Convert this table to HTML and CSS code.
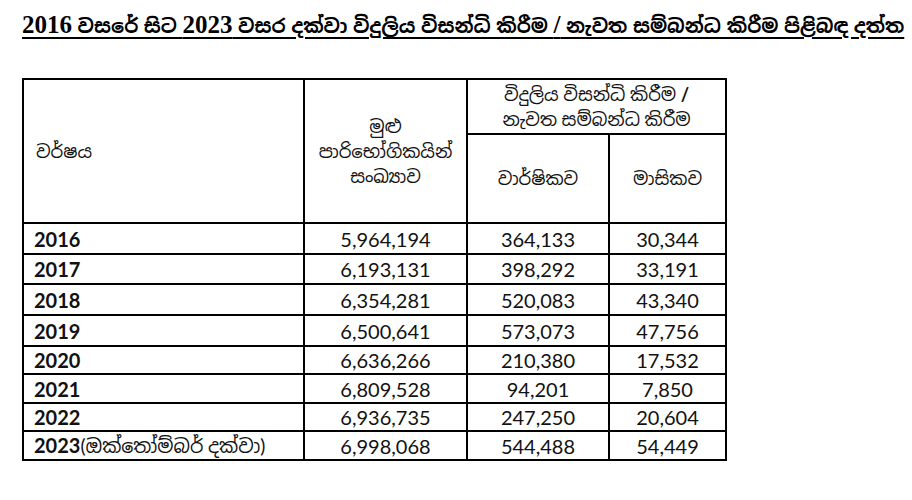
FILE: index.html
```html
<!DOCTYPE html>
<html lang="si">
<head>
<meta charset="utf-8">
<link rel="stylesheet" href="styles.css">
</head>
<body>
<div class="page">
  <h1 class="title"><span class="num">2016</span> වසරේ සිට <span class="num">2023</span> වසර දක්වා විදුලිය විසන්ධි කිරීම <span class="num">/</span> නැවත සම්බන්ධ කිරීම පිළිබඳ දත්ත</h1>
  <table class="data">
    <colgroup>
      <col class="c1"><col class="c2"><col class="c3"><col class="c4">
    </colgroup>
    <thead>
      <tr class="h1">
        <th rowspan="2" class="year-h">වර්ෂය</th>
        <th rowspan="2">මුළු<br>පාරිභෝගිකයින්<br>සංඛ්‍යාව</th>
        <th colspan="2">විදුලිය විසන්ධි කිරීම <b>/</b><br>නැවත සම්බන්ධ කිරීම</th>
      </tr>
      <tr class="h2">
        <th>වාර්ෂිකව</th>
        <th>මාසිකව</th>
      </tr>
    </thead>
    <tbody>
      <tr><td class="yr">2016</td><td>5,964,194</td><td>364,133</td><td>30,344</td></tr>
      <tr><td class="yr">2017</td><td>6,193,131</td><td>398,292</td><td>33,191</td></tr>
      <tr><td class="yr">2018</td><td>6,354,281</td><td>520,083</td><td>43,340</td></tr>
      <tr><td class="yr">2019</td><td>6,500,641</td><td>573,073</td><td>47,756</td></tr>
      <tr><td class="yr">2020</td><td>6,636,266</td><td>210,380</td><td>17,532</td></tr>
      <tr><td class="yr">2021</td><td>6,809,528</td><td>94,201</td><td>7,850</td></tr>
      <tr><td class="yr">2022</td><td>6,936,735</td><td>247,250</td><td>20,604</td></tr>
      <tr><td class="yr">2023<span class="si">(ඔක්තෝම්බර් දක්වා)</span></td><td>6,998,068</td><td>544,488</td><td>54,449</td></tr>
    </tbody>
  </table>
</div>
</body>
</html>
```
FILE: styles.css
```css
html, body {
  margin: 0;
  padding: 0;
  background: #fff;
}
.page {
  padding: 0 0 0 22px;
  color: #000;
}
.title {
  margin: 0;
  padding-top: 10px;
  font-family: "Liberation Serif", "Noto Sans Sinhala", serif;
  font-weight: bold;
  font-size: 19.5px;
  line-height: 30px;
  word-spacing: 0.7px;
  text-decoration: underline;
  text-decoration-thickness: 2px;
  text-underline-offset: 4px;
  white-space: nowrap;
}
.title .num {
  font-size: 25px;
}
.data {
  margin-top: 36px;
  border-collapse: collapse;
  width: 703px;
  table-layout: fixed;
  font-family: "Lato", "Noto Sans Sinhala", sans-serif;
  font-size: 20px;
  color: #111;
}
.c1 { width: 281px; }
.c2 { width: 163px; }
.c3 { width: 142px; }
.c4 { width: 117px; }
.data th, .data td {
  border: 2px solid #000;
  padding: 0;
  text-align: center;
  vertical-align: middle;
}
.data th {
  font-weight: normal;
  font-size: 18px;
  line-height: 25px;
}
.data .year-h {
  text-align: left;
  padding-left: 12px;
}
.h1 { height: 55px; }
.h2 { height: 89px; }
.data tbody tr { height: 30px; }
.data tbody tr:nth-child(1) { height: 31px; }
.data tbody tr:nth-child(3) { height: 31px; }
.data tbody tr:nth-child(4) { height: 31px; }
.data tbody tr:nth-child(5) { height: 28px; }
.data tbody tr:nth-child(6) { height: 29px; }
.data tbody tr:nth-child(7) { height: 28px; }
.data tbody tr:nth-child(8) { height: 29px; }
.data td.yr {
  text-align: left;
  padding-left: 10px;
  font-weight: bold;
}
.si { font-weight: normal; font-size: 19px; }
```
